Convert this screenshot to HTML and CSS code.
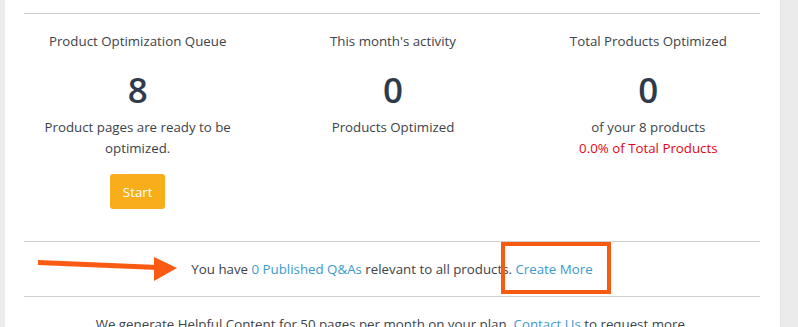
FILE: index.html
```html
<!DOCTYPE html>
<html>
<head>
<meta charset="utf-8">
<link rel="stylesheet" href="styles.css">
</head>
<body>
<div class="page">
  <div class="card">
    <hr class="rule rule-top">
    <div class="stats">
      <div class="stat">
        <div class="stat-title">Product Optimization Queue</div>
        <div class="stat-num">8</div>
        <div class="stat-desc">Product pages are ready to be optimized.</div>
        <button class="btn-start">Start</button>
      </div>
      <div class="stat">
        <div class="stat-title">This month's activity</div>
        <div class="stat-num">0</div>
        <div class="stat-desc">Products Optimized</div>
      </div>
      <div class="stat">
        <div class="stat-title">Total Products Optimized</div>
        <div class="stat-num">0</div>
        <div class="stat-desc">of your 8 products<br><span class="red">0.0% of Total Products</span></div>
      </div>
    </div>
    <hr class="rule">
    <p class="line">You have <a class="link" href="#">0 Published Q&amp;As</a> relevant to all products. <a class="link" href="#">Create More</a></p>
    <hr class="rule">
    <p class="line">We generate Helpful Content for 50 pages per month on your plan. <a class="link" href="#">Contact Us</a> to request more.</p>
    <svg class="annot" width="798" height="327" viewBox="0 0 798 327">
      <polygon points="38,260 158,265 158,270 38,265" fill="#fa5a12"/>
      <polygon points="154,257 177,268 154,281" fill="#fa5a12"/>
      <rect x="503" y="244" width="106" height="48" fill="none" stroke="#f75b12" stroke-width="4"/>
    </svg>
  </div>
</div>
</body>
</html>
```
FILE: styles.css
```css
html, body {
  margin: 0;
  padding: 0;
}
body {
  background: #ebebec;
  font-family: "Open Sans", "Noto Sans", sans-serif;
  font-size: 13.3px;
  color: #3c434a;
  width: 798px;
  height: 327px;
  overflow: hidden;
}
.page {
  display: flex;
  padding-left: 5px;
}
.card {
  background: #fff;
  width: 776px;
  border-right: 1px solid #e2e2e2;
  padding: 13px 20px 20px 19px;
  box-sizing: border-box;
  min-height: 400px;
}
.rule {
  border: 0;
  border-top: 1px solid #cfcfcf;
  margin: 0;
  height: 0;
}
.stats {
  display: grid;
  grid-template-columns: repeat(3, 1fr);
  margin: 0 -16px 0 -14px;
  padding-top: 17px;
  padding-bottom: 32px;
}
.stat {
  display: flex;
  flex-direction: column;
  align-items: center;
  text-align: center;
}
.stat-title {
  line-height: 20px;
}
.stat-num {
  font-size: 35px;
  font-weight: 600;
  color: #2f3b4c;
  line-height: 41px;
  margin-top: 18px;
}
.stat-desc {
  line-height: 21px;
  margin-top: 7px;
  max-width: 200px;
}
.red {
  color: #e30613;
}
.btn-start {
  margin-top: 15px;
  width: 55px;
  height: 35px;
  background: #f8ae1a;
  border: 0;
  border-radius: 3px;
  color: #fff;
  font-family: inherit;
  font-size: 13.3px;
  padding: 0;
}
.line {
  margin: 0;
  text-align: center;
  line-height: 20px;
  padding: 17px 0;
}
.link {
  color: #3a9ad0;
  text-decoration: none;
}
.annot {
  position: absolute;
  left: 0;
  top: 0;
  pointer-events: none;
}
```
